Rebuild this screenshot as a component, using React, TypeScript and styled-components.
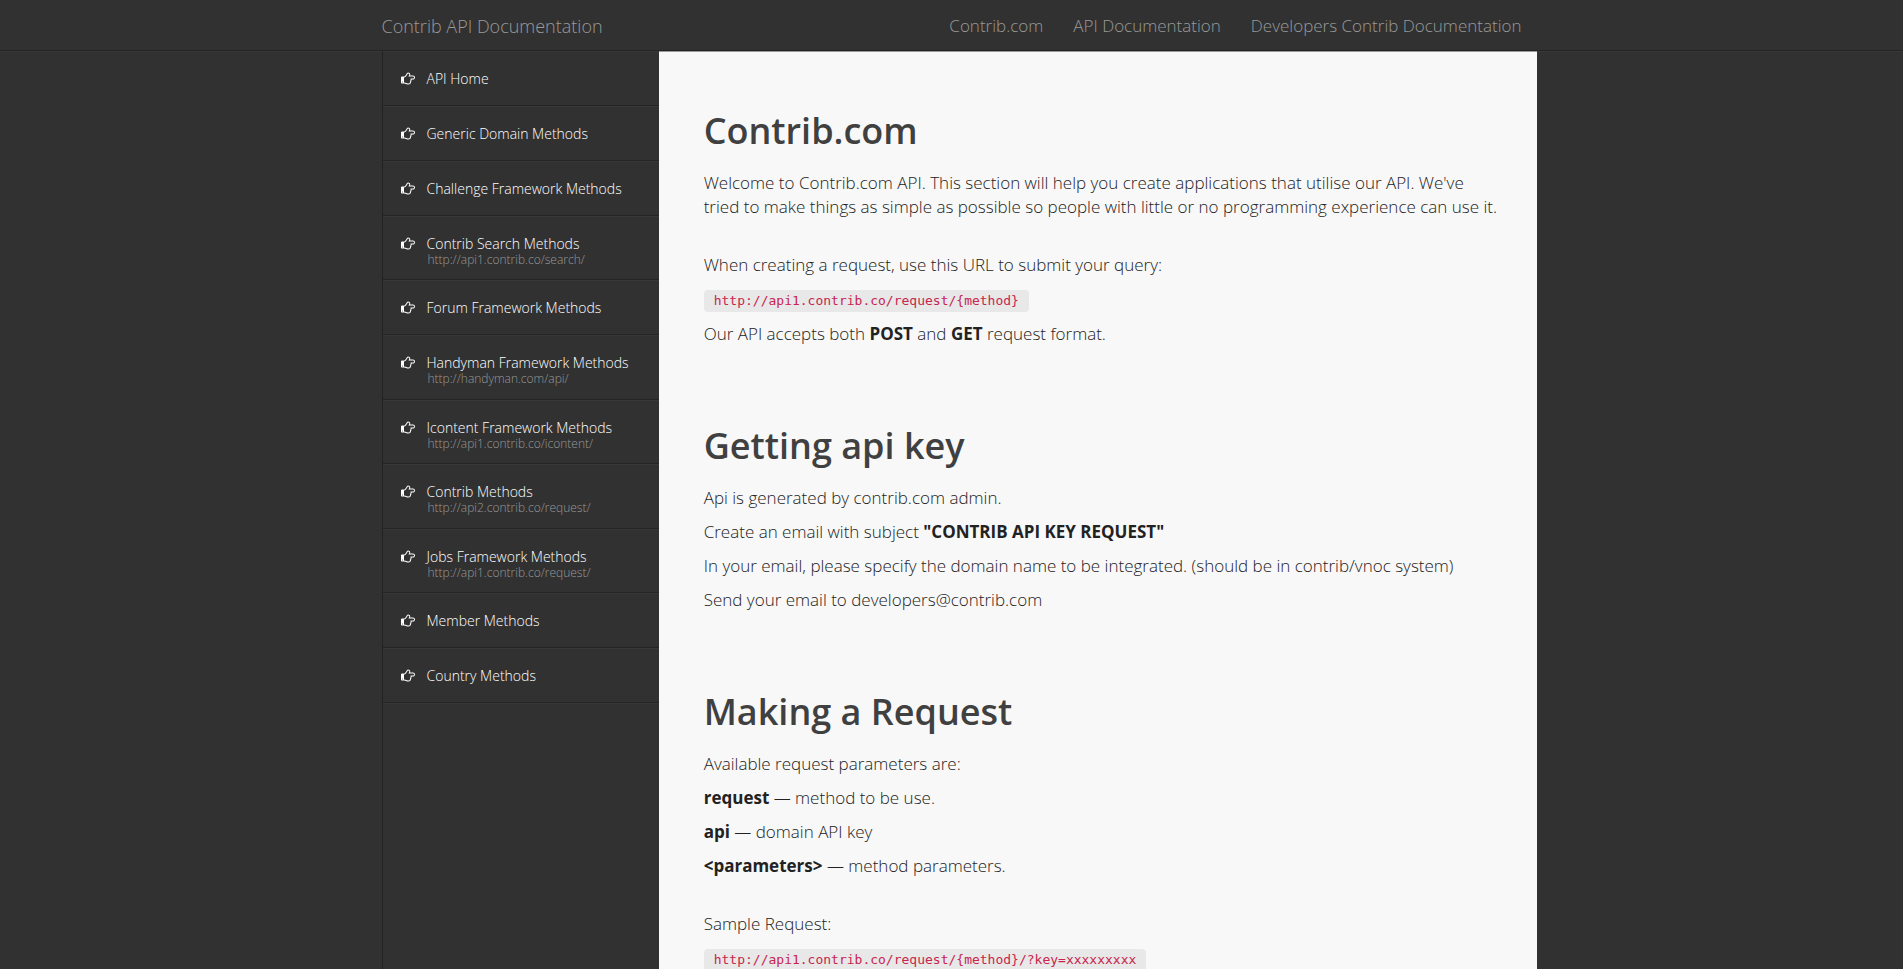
import React from "react";
import styled, { createGlobalStyle } from "styled-components";

const GlobalStyle = createGlobalStyle`
  *, *::before, *::after { box-sizing: border-box; }
  html { background: #313131; }
  body {
    margin: 0;
    background: #313131;
    color: #222;
    font-family: "Open Sans", "Liberation Sans", sans-serif;
    font-weight: 300;
    font-size: 17px;
    line-height: 24px;
  }
  a { text-decoration: none; }
`;

const Page = styled.div`
  display: flex;
  flex-direction: column;
  min-height: 100vh;
`;

const TopBar = styled.header`
  border-bottom: 1px solid #242424;
  box-shadow: 0 1px 0 #383838;
`;

const Container = styled.div`
  display: flex;
  width: 100%;
  max-width: 1170px;
  margin: 0 auto;
`;

const BarContent = styled(Container)`
  height: 50px;
  align-items: center;
  justify-content: space-between;
  padding: 2px 15px 0;
`;

const Brand = styled.a`
  color: #999;
  font-size: 18px;
`;

const TopNav = styled.nav`
  display: flex;
  gap: 30px;
`;

const TopLink = styled.a`
  color: #999;
  font-size: 17px;
`;

const Columns = styled(Container)`
  flex: 1;
  padding-left: 15px;
`;

const Sidebar = styled.aside`
  flex: 0 0 24%;
  border-left: 1px solid #222;
`;

const Menu = styled.ul`
  margin: 0;
  padding: 0;
  list-style: none;
`;

const MenuLink = styled.a`
  display: flex;
  align-items: flex-start;
  gap: 12px;
  min-height: 55px;
  padding: 19px 18px 12px;
  border-bottom: 1px solid #242424;
  box-shadow: 0 1px 0 #383838;
  color: #fff;
`;

const HandIcon = styled.svg`
  flex: none;
  width: 14px;
  height: 18px;
  fill: currentColor;
`;

const MenuTitle = styled.span`
  display: block;
  font-size: 14px;
  line-height: 18px;
`;

const MenuUrl = styled.span`
  display: block;
  padding-left: 1px;
  color: #999;
  font-size: 12px;
  line-height: 1.2;
`;

const Content = styled.main`
  flex: 1;
  padding: 0 36px 45px 45px;
  background: #f8f8f8;
  box-shadow: inset 0 1px 0 #999;
`;

const Section = styled.section`
  padding-top: 60px;
  & + & { padding-top: 70px; }
`;

const Heading = styled.h1`
  margin: 0 0 20px;
  color: #404040;
  font-size: 36px;
  font-weight: 600;
  line-height: 40px;
`;

const Text = styled.p<{ $spaced?: boolean }>`
  margin: 0 0 ${(p) => (p.$spaced ? 34 : 10)}px;
  strong { font-weight: 700; }
`;

const Code = styled.code`
  display: inline-block;
  padding: 2px 10px;
  border-radius: 4px;
  background: #e8e8e8;
  color: #c7254e;
  font-family: "DejaVu Sans Mono", monospace;
  font-size: 13px;
  font-weight: 400;
  line-height: 18px;
`;

const topLinks = ["Contrib.com", "API Documentation", "Developers Contrib Documentation"];

const menu: { title: string; url?: string }[] = [
  { title: "API Home" },
  { title: "Generic Domain Methods" },
  { title: "Challenge Framework Methods" },
  { title: "Contrib Search Methods", url: "http://api1.contrib.co/search/" },
  { title: "Forum Framework Methods" },
  { title: "Handyman Framework Methods", url: "http://handyman.com/api/" },
  { title: "Icontent Framework Methods", url: "http://api1.contrib.co/icontent/" },
  { title: "Contrib Methods", url: "http://api2.contrib.co/request/" },
  { title: "Jobs Framework Methods", url: "http://api1.contrib.co/request/" },
  { title: "Member Methods" },
  { title: "Country Methods" },
];

const Hand = () => (
  <HandIcon viewBox="0 -128 1792 2048" aria-hidden="true">
    <path d="M256 1280q0-26-19-45t-45-19-45 19-19 45 19 45 45 19 45-19 19-45zm1408-576q0-51-39-89.5t-89-38.5h-576q0-20 15-48.5t33-55 33-68 15-84.5q0-67-44.5-97.5t-115.5-30.5q-24 0-90 139-24 44-37 65-40 64-112 145-71 81-101 106-69 57-140 57h-32v640h32q72 0 167 32t193.5 64 179.5 32q189 0 189-167 0-26-5-56 30-16 47.5-52.5t17.5-73.5-18-69q53-50 53-119 0-25-10-55.5t-25-47.5h331q52 0 90-38t38-90zm128-1q0 105-75.5 181t-180.5 76h-169q-4 62-37 119 3 21 3 43 0 101-60 178 1 139-85 219.5t-227 80.5q-133 0-322-69-164-59-223-59h-288q-53 0-90.5-37.5t-37.5-90.5v-640q0-53 37.5-90.5t90.5-37.5h288q10 0 21.5-4.5t23.5-14 22.5-18 24-22.5 20.5-21.5 19-21.5 14-17q65-74 100-129 13-21 33-62t37-72 40.5-63 55-49.5 69.5-17.5q125 0 206.5 67t81.5 189q0 68-22 128h374q104 0 180 76t76 179z" />
  </HandIcon>
);

export default function App() {
  return (
    <Page>
      <GlobalStyle />
      <TopBar>
        <BarContent>
          <Brand href="#">Contrib API Documentation</Brand>
          <TopNav>
            {topLinks.map((label) => (
              <TopLink href="#" key={label}>{label}</TopLink>
            ))}
          </TopNav>
        </BarContent>
      </TopBar>
      <Columns>
        <Sidebar>
          <Menu>
            {menu.map(({ title, url }) => (
              <li key={title}>
                <MenuLink href="#">
                  <Hand />
                  <span>
                    <MenuTitle>{title}</MenuTitle>
                    {url && <MenuUrl>{url}</MenuUrl>}
                  </span>
                </MenuLink>
              </li>
            ))}
          </Menu>
        </Sidebar>
        <Content>
          <Section>
            <Heading>Contrib.com</Heading>
            <Text $spaced>
              Welcome to Contrib.com API. This section will help you create applications that
              utilise our API. We've tried to make things as simple as possible so people with
              little or no programming experience can use it.
            </Text>
            <Text>When creating a request, use this URL to submit your query:</Text>
            <Text><Code>{"http://api1.contrib.co/request/{method}"}</Code></Text>
            <Text>
              Our API accepts both <strong>POST</strong> and <strong>GET</strong> request format.
            </Text>
          </Section>
          <Section>
            <Heading>Getting api key</Heading>
            <Text>Api is generated by contrib.com admin.</Text>
            <Text>Create an email with subject <strong>"CONTRIB API KEY REQUEST"</strong></Text>
            <Text>
              In your email, please specify the domain name to be integrated. (should be in
              contrib/vnoc system)
            </Text>
            <Text>Send your email to developers@contrib.com</Text>
          </Section>
          <Section>
            <Heading>Making a Request</Heading>
            <Text>Available request parameters are:</Text>
            <Text><strong>request</strong> — method to be use.</Text>
            <Text><strong>api</strong> — domain API key</Text>
            <Text $spaced><strong>{"<parameters>"}</strong> — method parameters.</Text>
            <Text>Sample Request:</Text>
            <Text><Code>{"http://api1.contrib.co/request/{method}/?key=xxxxxxxxx"}</Code></Text>
          </Section>
        </Content>
      </Columns>
    </Page>
  );
}
